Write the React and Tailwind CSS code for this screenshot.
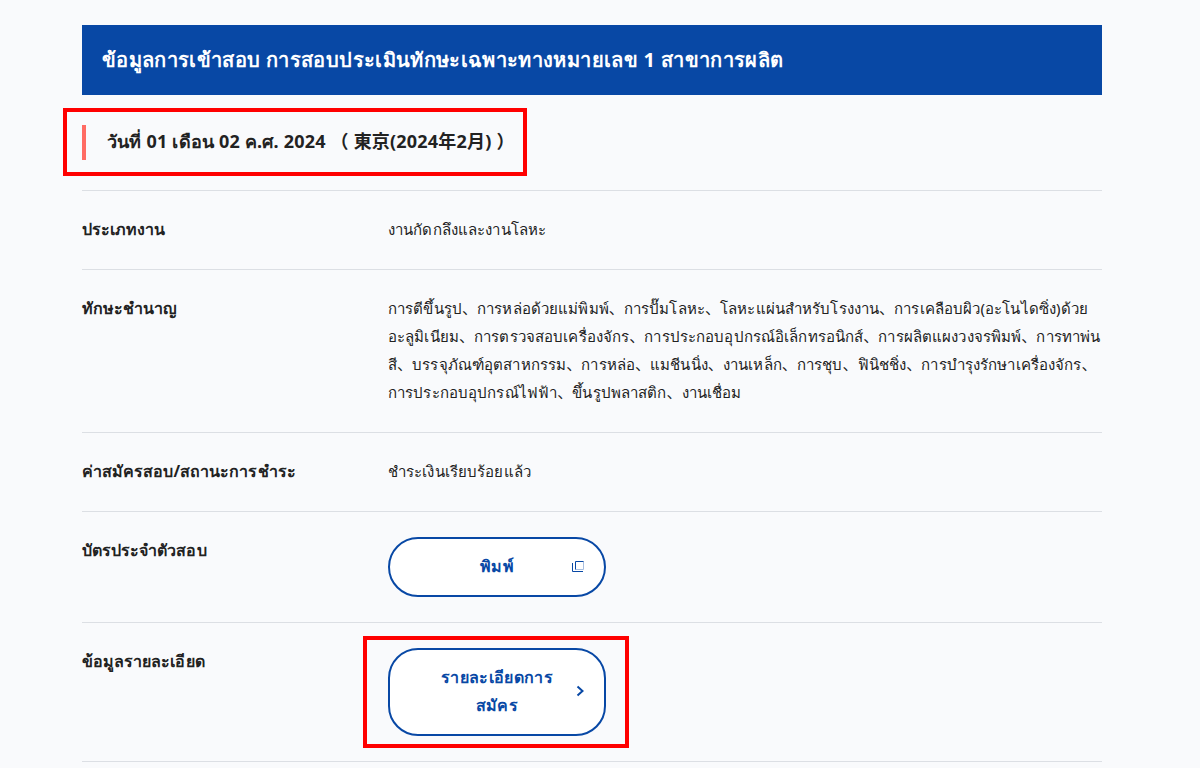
const rowClass = "flex border-t border-[#dcdfe4] pt-[25px] pb-[25px]";
const labelClass = "-mt-px mb-px w-[306px] shrink-0 text-[16px] leading-[28px] tracking-[0.05px] font-bold text-[#222]";
const valueClass = "-mt-px mb-px flex-1 text-[15px] leading-[28px] tracking-[0.12px] text-[#222]";
const buttonClass = "relative flex w-[218px] items-center justify-center rounded-[30px] border-2 border-[#0848a5] bg-white pb-[2px] text-[16px] leading-[28px] tracking-[0.33px] font-bold text-[#0848a5]";

function PrintIcon() {
  return (
    <svg className="absolute right-[19px] top-[20px]" width="14" height="14" viewBox="0 0 14 14" fill="none" strokeWidth="1">
      <path d="M12.5 2.5V10.5H4.5" stroke="#a9bfe0" />
      <path d="M4.5 10.5V2.5H12.5" stroke="#0848a5" />
      <path d="M1.5 4V12.5H12" stroke="#0848a5" />
    </svg>
  );
}

function ChevronIcon() {
  return (
    <svg className="absolute right-[19px] top-[35px]" width="9" height="12" viewBox="0 0 9 12" fill="none" stroke="#0848a5" strokeWidth="2">
      <path d="M1.5 1.5L6.5 6L1.5 10.5" />
    </svg>
  );
}

export default function App() {
  return (
    <div className="relative min-h-[768px] overflow-hidden bg-[#f9fafc] font-['Noto_Sans','Noto_Sans_CJK_JP',sans-serif]">
      <div className="mx-auto w-[1020px] translate-x-[-8px] pt-[25px]">
        <h2 className="flex h-[70px] items-center bg-[#0848a5] px-5 text-[20px] tracking-[0.35px] font-bold text-white">
          ข้อมูลการเข้าสอบ การสอบประเมินทักษะเฉพาะทางหมายเลข 1 สาขาการผลิต
        </h2>

        <div className="mt-[30px] mb-[30px] flex h-[35px] items-center border-l-4 border-[#ff6b63] pb-[2px] pl-[21px] text-[18px] tracking-[0.2px] font-bold text-[#222]">
          วันที่ 01 เดือน 02 ค.ศ. 2024 （ 東京(2024年2月) ）
        </div>

        <div className={rowClass}>
          <div className={labelClass}>ประเภทงาน</div>
          <div className={valueClass}>งานกัดกลึงและงานโลหะ</div>
        </div>
        <div className={rowClass}>
          <div className={labelClass}>ทักษะชำนาญ</div>
          <div className={valueClass}>
            การตีขึ้นรูป、การหล่อด้วยแม่พิมพ์、การปั๊มโลหะ、โลหะแผ่นสำหรับโรงงาน、การเคลือบผิว(อะโนไดซิ่ง)ด้วยอะลูมิเนียม、การตรวจสอบเครื่องจักร、การประกอบอุปกรณ์อิเล็กทรอนิกส์、การผลิตแผงวงจรพิมพ์、การทาพ่นสี、บรรจุภัณฑ์อุตสาหกรรม、การหล่อ、แมชีนนิ่ง、งานเหล็ก、การชุบ、ฟินิชชิ่ง、การบำรุงรักษาเครื่องจักร、การประกอบอุปกรณ์ไฟฟ้า、ขึ้นรูปพลาสติก、งานเชื่อม
          </div>
        </div>
        <div className={rowClass}>
          <div className={labelClass}>ค่าสมัครสอบ/สถานะการชำระ</div>
          <div className={valueClass}>ชำระเงินเรียบร้อยแล้ว</div>
        </div>
        <div className={rowClass}>
          <div className={labelClass}>บัตรประจำตัวสอบ</div>
          <button type="button" className={`${buttonClass} h-[60px]`}>
            พิมพ์
            <PrintIcon />
          </button>
        </div>
        <div className={rowClass}>
          <div className={labelClass}>ข้อมูลรายละเอียด</div>
          <button type="button" className={`${buttonClass} h-[88px] px-[40px]`}>
            รายละเอียดการสมัคร
            <ChevronIcon />
          </button>
        </div>
        <div className="border-t border-[#dcdfe4]" />
      </div>

      <div className="absolute left-[63px] top-[108px] h-[68px] w-[464px] border-4 border-[#ff0000]" />
      <div className="absolute left-[363px] top-[636px] h-[112px] w-[266px] border-4 border-[#ff0000]" />
    </div>
  );
}
